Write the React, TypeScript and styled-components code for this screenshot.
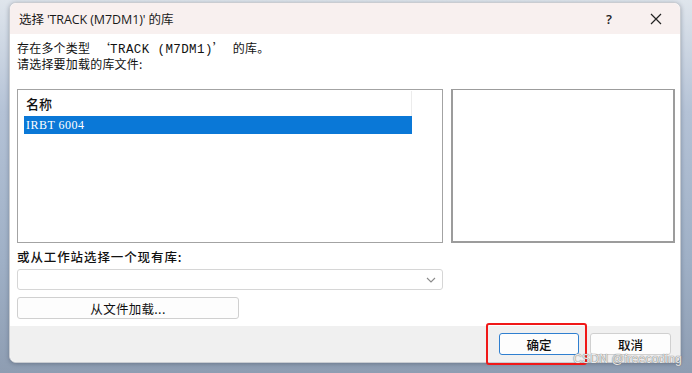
import React from "react";
import styled, { createGlobalStyle } from "styled-components";

const Global = createGlobalStyle`
  html, body { margin: 0; padding: 0; }
  body { width: 692px; height: 373px; overflow: hidden; font-family: "Noto Sans CJK SC", "Noto Sans", sans-serif; }
`;

const Desktop = styled.div`
  position: relative;
  width: 692px;
  height: 373px;
  box-sizing: border-box;
  padding: 2px 11px 10px 9px;
  background: linear-gradient(180deg, #dfe5ec 0%, #b4c2d6 30%, #9fb0c6 70%, #8e9db2 100%);
`;

const Window = styled.div`
  height: 361px;
  box-sizing: border-box;
  display: flex;
  flex-direction: column;
  background: #ffffff;
  border: 1px solid #c9ccd1;
  border-radius: 7px;
  box-shadow: 0 1px 4px rgba(40, 50, 70, 0.35);
`;

const TitleBar = styled.div`
  height: 31px;
  display: flex;
  align-items: center;
  padding-left: 9px;
  background: #f8f0ef;
  border-radius: 7px 7px 0 0;
`;

const Title = styled.div`
  flex: 1;
  font-family: "Open Sans", "Noto Sans CJK SC", sans-serif;
  font-size: 12.5px;
  color: #1a1a1a;
  letter-spacing: -0.1px;
`;

const TitleButton = styled.div<{ $w: number }>`
  width: ${(p) => p.$w}px;
  height: 31px;
  display: flex;
  align-items: center;
  justify-content: center;
  color: #222;
  font-family: "Open Sans", sans-serif;
  font-size: 13px;
  font-weight: 600;
`;

const Body = styled.div`
  flex: 1;
  display: flex;
  flex-direction: column;
  padding: 7px 5px 0 7px;
`;

const Intro = styled.div`
  font-family: "Noto Sans CJK SC", sans-serif;
  font-size: 12px;
  line-height: 14px;
  color: #111;
  letter-spacing: 0.2px;
`;

const Quote = styled.span`
  display: inline-block;
  width: 12px;
  text-align: center;
  font-family: "Noto Sans CJK SC", sans-serif;
`;

const Mono = styled.span`
  font-family: "Liberation Mono", monospace;
  font-size: 12.5px;
  letter-spacing: 0.4px;
`;

const Panels = styled.div`
  display: flex;
  gap: 8px;
  margin-top: 18px;
  height: 154px;
`;

const ListBox = styled.div`
  width: 426px;
  box-sizing: border-box;
  border: 1px solid #a3a3a3;
  padding: 1px 30px 0 6px;
  display: flex;
  flex-direction: column;
`;

const Preview = styled.div`
  flex: 1;
  box-sizing: border-box;
  border: 2px solid #9c9c9c;
  border-width: 1px 2px 2px 2px;
  background: #fff;
`;

const HeaderCell = styled.div`
  height: 25px;
  display: flex;
  align-items: center;
  padding-left: 2px;
  border-right: 1px solid #ececec;
  font-size: 13px;
  font-weight: 500;
  color: #111;
`;

const Row = styled.div<{ $selected?: boolean }>`
  height: 18px;
  display: flex;
  align-items: center;
  padding-left: 2px;
  background: ${(p) => (p.$selected ? "#0a78d7" : "transparent")};
  color: ${(p) => (p.$selected ? "#fff" : "#111")};
  font-family: "Liberation Serif", serif;
  font-size: 12px;
  letter-spacing: 0.5px;
`;

const Label = styled.div`
  margin-top: 6px;
  font-size: 12.5px;
  font-weight: 500;
  line-height: 15px;
  color: #111;
  letter-spacing: 0.9px;
`;

const Combo = styled.div`
  margin-top: 5px;
  width: 426px;
  height: 21px;
  box-sizing: border-box;
  border: 1px solid #d6d6d6;
  border-radius: 3px;
  display: flex;
  align-items: center;
  justify-content: flex-end;
  padding-right: 6px;
  color: #8a8a8a;
`;

const Button = styled.button<{ $w: number; $primary?: boolean }>`
  position: relative;
  width: ${(p) => p.$w}px;
  height: 22px;
  box-sizing: border-box;
  border: 1px solid ${(p) => (p.$primary ? "#2f7fd0" : "#d0d0d0")};
  border-radius: 3px;
  background: #fdfdfd;
  font-family: "Noto Sans CJK SC", sans-serif;
  font-size: 12.5px;
  font-weight: 500;
  color: #111;
  padding: 0;
  display: flex;
  align-items: center;
  justify-content: center;
`;

const FileButton = styled(Button)`
  margin-top: 7px;
  font-weight: 400;
  letter-spacing: 0.3px;
`;

const Footer = styled.div`
  height: 39px;
  margin-top: 7px;
  background: #f0f0f0;
  border-radius: 0 0 7px 7px;
  display: flex;
  align-items: center;
  justify-content: flex-end;
  gap: 11px;
  padding: 0 9px 0 0;
`;

const Highlight = styled.div`
  position: absolute;
  left: -14px;
  right: -9px;
  top: -11px;
  bottom: -11px;
  border: 2px solid #f01818;
  border-radius: 3px;
  pointer-events: none;
`;

const Watermark = styled.div`
  position: absolute;
  right: 10px;
  bottom: 7px;
  font-family: "Liberation Sans", sans-serif;
  font-size: 12px;
  color: rgba(255, 255, 255, 0.85);
  text-shadow: 0 0 1px #777, 0 0 1px #777;
  letter-spacing: 0.2px;
`;

export default function App() {
  return (
    <>
      <Global />
      <Desktop>
        <Window>
          <TitleBar>
            <Title>选择 'TRACK (M7DM1)' 的库</Title>
            <TitleButton $w={46}>?</TitleButton>
            <TitleButton $w={48}>
              <svg width="12" height="12" viewBox="0 0 12 12">
                <path d="M1 1L11 11M11 1L1 11" stroke="#222" strokeWidth="1.2" />
              </svg>
            </TitleButton>
          </TitleBar>
          <Body>
            <Intro>
              存在多个类型<Mono> </Mono>
              <Quote>‘</Quote>
              <Mono>TRACK (M7DM1)</Mono>
              <Quote>’</Quote>
              <Mono> </Mono>的库。
              <br />
              请选择要加载的库文件:
            </Intro>
            <Panels>
              <ListBox>
                <HeaderCell>名称</HeaderCell>
                <Row $selected>IRBT 6004</Row>
              </ListBox>
              <Preview />
            </Panels>
            <Label>或从工作站选择一个现有库:</Label>
            <Combo>
              <svg width="10" height="6" viewBox="0 0 10 6">
                <path d="M1 1L5 5L9 1" stroke="#8a8a8a" strokeWidth="1.1" fill="none" />
              </svg>
            </Combo>
            <FileButton $w={222}>从文件加载...</FileButton>
          </Body>
          <Footer>
            <Button $w={80} $primary>
              确定
              <Highlight />
            </Button>
            <Button $w={81}>取消</Button>
          </Footer>
        </Window>
        <Watermark>CSDN @freecoding</Watermark>
      </Desktop>
    </>
  );
}
